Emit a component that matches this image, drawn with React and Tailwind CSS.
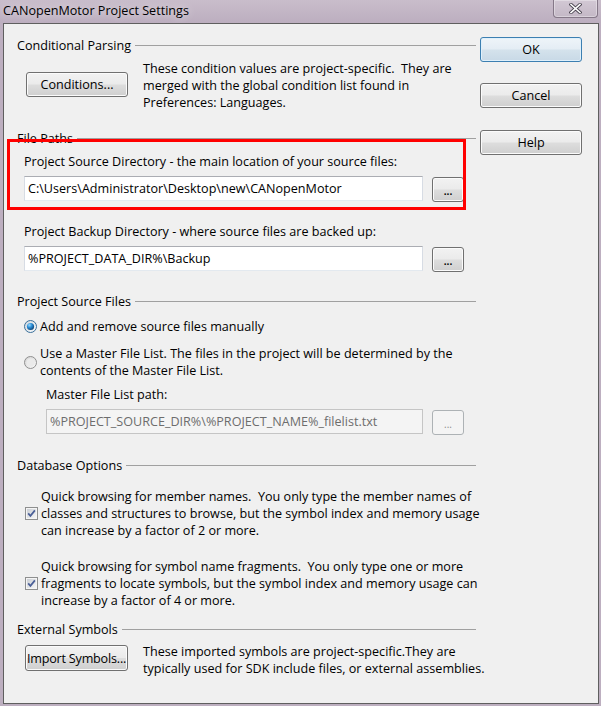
import React from "react";

const BTN =
  "flex shrink-0 items-center justify-center whitespace-nowrap rounded-[3px] border border-[#707070] bg-[linear-gradient(#f2f2f2_0%,#ebebeb_48%,#dddddd_52%,#cfcfcf_100%)] shadow-[inset_0_0_0_1px_#fbfbfb] text-black";

function Btn({ children, className = "" }) {
  return <div className={`${BTN} ${className}`}>{children}</div>;
}

function DotsBtn({ disabled }) {
  if (disabled) {
    return (
      <div className="ml-[9px] mt-[1px] flex h-[25px] w-[32px] shrink-0 items-end justify-center rounded-[3px] border border-[#adb2b5] bg-[#f4f4f4] pb-[5px] text-[10px] leading-none text-[#8d8d8d]">
        ...
      </div>
    );
  }
  return (
    <div className={`${BTN} ml-[9px] mt-[1px] h-[25px] w-[32px] !items-end pb-[5px] text-[10px] font-bold leading-none text-[#222]`}>
      ...
    </div>
  );
}

function Header({ title }) {
  return (
    <div className="flex h-[17px] items-center">
      <span className="whitespace-nowrap">{title}</span>
      <div className="ml-[4px] mt-[-1px] h-px flex-1 bg-[#a0a0a0]" />
    </div>
  );
}

function TextInput({ value, className = "" }) {
  return (
    <div className={`flex h-[25px] shrink-0 items-center border border-[#abadb3] border-b-[#e3e9ef] border-l-[#d7dce4] border-r-[#d7dce4] bg-white pl-[3px] whitespace-nowrap ${className}`}>
      {value}
    </div>
  );
}

function RadioOn() {
  return (
    <svg width="13" height="13" viewBox="0 0 13 13" className="shrink-0">
      <defs>
        <linearGradient id="rbg1" x1="0" y1="0" x2="1" y2="1">
          <stop offset="0" stopColor="#cfd6dc" />
          <stop offset="1" stopColor="#fafcfd" />
        </linearGradient>
        <radialGradient id="rdot" cx="0.35" cy="0.3" r="0.75">
          <stop offset="0" stopColor="#9bd9fb" />
          <stop offset="0.45" stopColor="#2b8fd8" />
          <stop offset="1" stopColor="#0c3f70" />
        </radialGradient>
      </defs>
      <circle cx="6.5" cy="6.5" r="6" fill="url(#rbg1)" stroke="#3a6f99" />
      <circle cx="6.5" cy="6.5" r="3.6" fill="url(#rdot)" />
    </svg>
  );
}

function RadioOff() {
  return (
    <svg width="13" height="13" viewBox="0 0 13 13" className="shrink-0">
      <defs>
        <linearGradient id="rbg2" x1="0" y1="0" x2="1" y2="1">
          <stop offset="0" stopColor="#d2d2d2" />
          <stop offset="1" stopColor="#fbfbfb" />
        </linearGradient>
      </defs>
      <circle cx="6.5" cy="6.5" r="6" fill="url(#rbg2)" stroke="#8f8f8f" />
      <circle cx="6.5" cy="6.5" r="4" fill="#eaeaea" />
    </svg>
  );
}

function Check() {
  return (
    <svg width="13" height="13" viewBox="0 0 13 13" className="shrink-0">
      <defs>
        <linearGradient id="cbg" x1="0" y1="0" x2="1" y2="1">
          <stop offset="0" stopColor="#cbcfd5" />
          <stop offset="1" stopColor="#f6f6f6" />
        </linearGradient>
      </defs>
      <rect x="0.5" y="0.5" width="12" height="12" fill="#f5f5f5" stroke="#8e8f8f" />
      <rect x="2" y="2" width="9" height="9" fill="url(#cbg)" />
      <path d="M3.2 6.4 L5.4 8.9 L9.9 3.4" stroke="#4a5f97" strokeWidth="1.7" fill="none" />
    </svg>
  );
}

export default function App() {
  return (
    <div className="flex h-[706px] w-[601px] flex-col overflow-hidden bg-[#bdafc0] font-['Open_Sans','Noto_Sans',sans-serif] text-[12.6px] leading-[17px] text-black">
      {/* title bar */}
      <div className="flex h-[23px] items-start bg-[linear-gradient(#c9bdcb,#bcaebf)]">
        <div className="ml-[3px] mt-[3px] whitespace-nowrap text-[12.6px] leading-[16px] text-black [text-shadow:0_0_8px_rgba(255,255,255,0.8)]">
          CANopenMotor Project Settings
        </div>
        <div className="ml-auto mr-[3px] flex h-[18px] w-[45px] items-center justify-center rounded-b-[4px] border border-t-0 border-[#857888] bg-[linear-gradient(#d2c8d4,#c4b8c6)] shadow-[inset_0_0_0_1px_rgba(255,255,255,0.35)]">
          <svg width="13" height="11" viewBox="0 0 13 11">
            <path d="M2 1.5 L11 9.5 M11 1.5 L2 9.5" stroke="#4a4450" strokeWidth="3.4" strokeLinecap="square" />
            <path d="M2 1.5 L11 9.5 M11 1.5 L2 9.5" stroke="#ffffff" strokeWidth="1.6" strokeLinecap="square" />
          </svg>
        </div>
      </div>

      {/* client area */}
      <div className="relative ml-[3px] flex h-[681px] w-[596px] border border-[#5f5f5f] bg-[#f0f0f0]">
        {/* left column */}
        <div className="ml-[13px] flex w-[459px] flex-col pt-[13px]">
          <Header title="Conditional Parsing" />
          <div className="mt-[6px] flex items-start">
            <Btn className="ml-[9px] mt-[12px] h-[25px] w-[102px]">Conditions...</Btn>
            <div className="ml-[15px] whitespace-nowrap">
              These condition values are project-specific.&nbsp; They are
              <br />
              merged with the global condition list found in
              <br />
              Preferences: Languages.
            </div>
          </div>

          <div className="mt-[19px]">
            <Header title="File Paths" />
          </div>
          <div className="ml-[7px] mt-[6px] whitespace-nowrap">
            Project Source Directory - the main location of your source files:
          </div>
          <div className="ml-[7px] mt-[6px] flex items-start">
            <TextInput value="C:\Users\Administrator\Desktop\new\CANopenMotor" className="w-[399px]" />
            <DotsBtn />
          </div>
          <div className="ml-[7px] mt-[21px] whitespace-nowrap">
            Project Backup Directory - where source files are backed up:
          </div>
          <div className="ml-[7px] mt-[6px] flex items-start">
            <TextInput value="%PROJECT_DATA_DIR%\Backup" className="w-[399px]" />
            <DotsBtn />
          </div>

          <div className="mt-[21px]">
            <Header title="Project Source Files" />
          </div>
          <div className="ml-[7px] mt-[8px] flex items-center">
            <RadioOn />
            <span className="ml-[3px] whitespace-nowrap">Add and remove source files manually</span>
          </div>
          <div className="ml-[7px] mt-[10px] flex items-center">
            <RadioOff />
            <span className="ml-[3px] whitespace-nowrap">
              Use a Master File List. The files in the project will be determined by the
              <br />
              contents of the Master File List.
            </span>
          </div>
          <div className="ml-[29px] mt-[7px] whitespace-nowrap">Master File List path:</div>
          <div className="ml-[29px] mt-[6px] flex items-start">
            <div className="flex h-[25px] w-[377px] shrink-0 items-center border border-[#c5c5c5] bg-[#f4f4f4] pl-[3px] whitespace-nowrap text-[#6d6d6d]">
              %PROJECT_SOURCE_DIR%\%PROJECT_NAME%_filelist.txt
            </div>
            <DotsBtn disabled />
          </div>

          <div className="mt-[22px]">
            <Header title="Database Options" />
          </div>
          <div className="ml-[8px] mt-[14px] flex items-center">
            <Check />
            <span className="ml-[3px] whitespace-nowrap">
              Quick browsing for member names.&nbsp; You only type the member names of
              <br />
              classes and structures to browse, but the symbol index and memory usage
              <br />
              can increase by a factor of 2 or more.
            </span>
          </div>
          <div className="ml-[8px] mt-[19px] flex items-center">
            <Check />
            <span className="ml-[3px] whitespace-nowrap">
              Quick browsing for symbol name fragments.&nbsp; You only type one or more
              <br />
              fragments to locate symbols, but the symbol index and memory usage can
              <br />
              increase by a factor of 4 or more.
            </span>
          </div>

          <div className="mt-[12px]">
            <Header title="External Symbols" />
          </div>
          <div className="mt-[5px] flex items-start">
            <Btn className="ml-[8px] mt-[2px] h-[26px] w-[103px] tracking-[-0.2px]">Import Symbols...</Btn>
            <div className="ml-[15px] whitespace-nowrap">
              These imported symbols are project-specific.They are
              <br />
              typically used for SDK include files, or external assemblies.
            </div>
          </div>
        </div>

        {/* right column */}
        <div className="ml-[4px] flex w-[102px] flex-col pt-[13px]">
          <div className="flex h-[25px] items-center justify-center rounded-[3px] border border-[#3c7fb1] bg-[linear-gradient(#eef4f9_0%,#e4edf4_48%,#d4e2ec_52%,#c8d9e6_100%)] shadow-[inset_0_0_0_1px_#dff0fb]">
            OK
          </div>
          <Btn className="mt-[21px] h-[25px]">Cancel</Btn>
          <Btn className="mt-[22px] h-[25px]">Help</Btn>
        </div>

        {/* red annotation box */}
        <div className="pointer-events-none absolute left-[3px] top-[115px] h-[71px] w-[459px] border-[3px] border-[#ff0000]" />
      </div>
    </div>
  );
}
